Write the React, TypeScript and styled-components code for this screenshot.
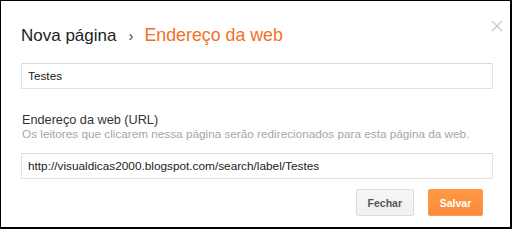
import { createGlobalStyle } from "styled-components";
import styled from "styled-components";

const GlobalStyle = createGlobalStyle`
  html, body {
    margin: 0;
    padding: 0;
    background: #fff;
  }
  body {
    font-family: "Liberation Sans", Arial, sans-serif;
  }
`;

function CloseIcon() {
  return (
    <svg width="12" height="12" viewBox="0 0 12 12">
      <path d="M1 1 L11 11 M11 1 L1 11" stroke="#c4c8cc" strokeWidth="1.2" fill="none" />
    </svg>
  );
}

function App() {
  return (
    <>
      <GlobalStyle />
      <Frame>
        <Dialog>
          <Header>
            <Title>
              <span>Nova página</span>
              <Chevron>›</Chevron>
              <Current>Endereço da web</Current>
            </Title>
            <CloseButton aria-label="Fechar">
              <CloseIcon />
            </CloseButton>
          </Header>

          <TextInput defaultValue="Testes" gap={17} />

          <Field>
            <Label>Endereço da web (URL)</Label>
            <Hint>
              Os leitores que clicarem nessa página serão redirecionados para esta página da web.
            </Hint>
          </Field>

          <TextInput defaultValue="http://visualdicas2000.blogspot.com/search/label/Testes" gap={12} />

          <Actions>
            <Button>Fechar</Button>
            <Button primary>Salvar</Button>
          </Actions>
        </Dialog>
      </Frame>
    </>
  );
}

const Frame = styled.div`
  box-sizing: border-box;
  width: 512px;
  height: 229px;
  border-style: solid;
  border-color: #000;
  border-width: 1px 2px 2px 1px;
  background: #fff;
  overflow: hidden;
`;

const Dialog = styled.div`
  padding: 0 18px 0 20px;
  display: flex;
  flex-direction: column;
`;

const Header = styled.div`
  display: flex;
  justify-content: space-between;
  align-items: flex-start;
  padding-top: 24px;
  margin-right: -11px;
`;

const Title = styled.h1`
  margin: 0;
  font-size: 17px;
  font-weight: 400;
  line-height: 21px;
  color: #222;
  display: flex;
  align-items: baseline;
`;

const Chevron = styled.span`
  font-size: 15px;
  color: #444;
  margin: 0 11px 0 12px;
`;

const Current = styled.span`
  font-size: 17.8px;
  color: #f4701f;
`;

const CloseButton = styled.button`
  border: 0;
  background: transparent;
  padding: 0;
  margin-top: -5px;
  display: flex;
`;

const TextInput = styled.input<{ gap: number }>`
  box-sizing: border-box;
  width: 472px;
  height: 26px;
  margin-top: ${(p) => p.gap}px;
  padding: 0 6px;
  border: 1px solid #e2e2e2;
  border-top-color: #d9d9d9;
  border-radius: 1px;
  font-family: "Liberation Sans", Arial, sans-serif;
  font-size: 11.8px;
  color: #222;
  outline: none;
`;

const Field = styled.div`
  margin-top: 24px;
  padding-left: 1px;
  display: flex;
  flex-direction: column;
`;

const Label = styled.div`
  font-size: 12.7px;
  line-height: 14px;
  color: #333;
`;

const Hint = styled.div`
  font-size: 11.75px;
  line-height: 14px;
  color: #a6a6a6;
  white-space: nowrap;
`;

const Actions = styled.div`
  display: flex;
  justify-content: flex-end;
  gap: 14px;
  margin-top: 10px;
  padding-right: 9px;
`;

const Button = styled.button<{ primary?: boolean }>`
  box-sizing: border-box;
  height: 27px;
  min-width: ${(p) => (p.primary ? "55px" : "58px")};
  padding: 0 ${(p) => (p.primary ? "10px" : "11px")};
  border-radius: 2px;
  font-family: "Liberation Sans", Arial, sans-serif;
  font-size: 10.5px;
  font-weight: 700;
  border: 1px solid ${(p) => (p.primary ? "#f89a4f" : "#dcdcdc")};
  color: ${(p) => (p.primary ? "#fff" : "#555")};
  background: ${(p) =>
    p.primary
      ? "linear-gradient(#ff9844, #fc8a37)"
      : "linear-gradient(#f5f5f5, #f1f1f1)"};
`;

export default App;
